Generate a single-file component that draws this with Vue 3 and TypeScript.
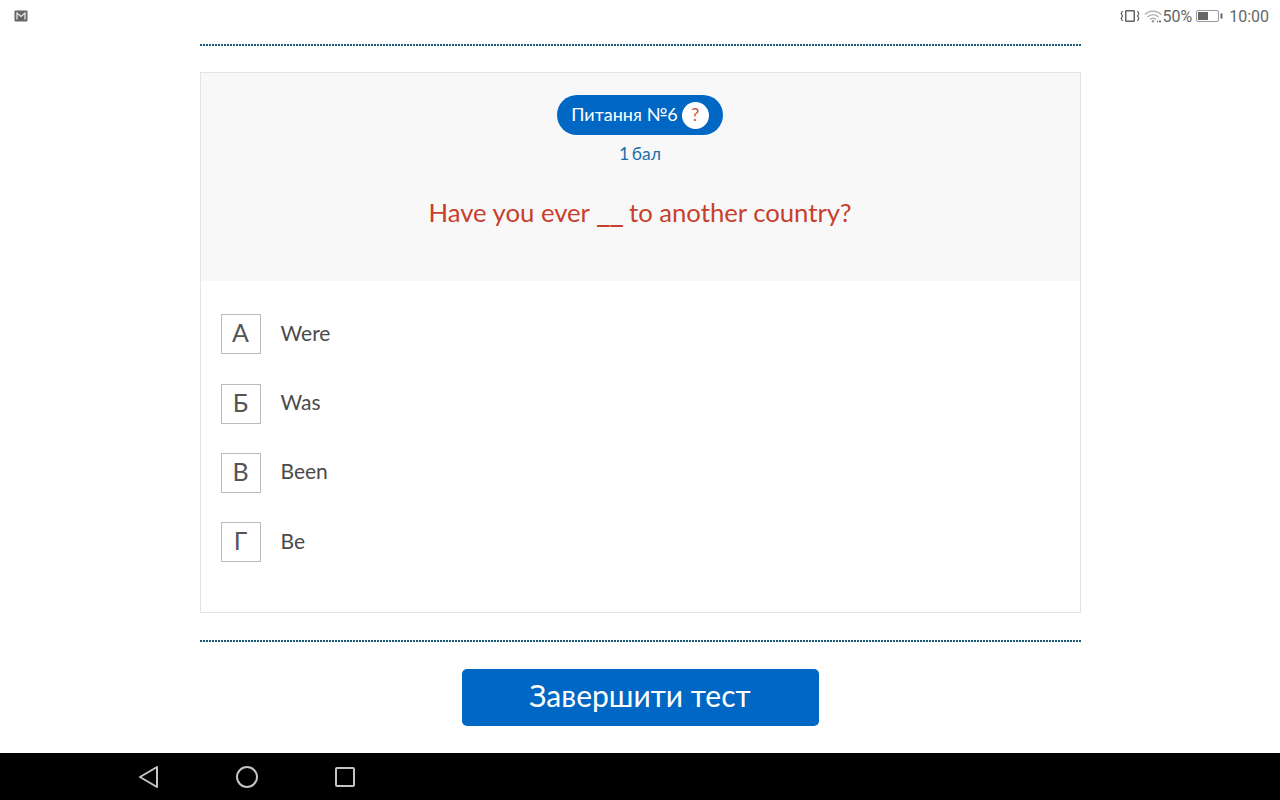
<script setup lang="ts">
const options = [
  { letter: "А", text: "Were" },
  { letter: "Б", text: "Was" },
  { letter: "В", text: "Been" },
  { letter: "Г", text: "Be" },
];
</script>

<template>
  <div class="screen">
    <div class="status">
      <svg class="mail" width="14" height="12" viewBox="0 0 14 12">
        <rect x="0.5" y="0.5" width="13" height="11" rx="1" fill="#666" />
        <path d="M3 9.5V3l4 3.5L11 3v6.5" fill="none" stroke="#eee" stroke-width="1.2" />
      </svg>
      <div class="status-right">
        <svg class="vibrate" width="20" height="16" viewBox="0 0 20 16" fill="none" stroke="#666">
          <rect x="5.750" y="2.750" width="8.500" height="10.500" rx="0.500" stroke-width="1.500" />
          <path d="M2.500 3 1.200 5.500l1.300 2.500-1.300 2.500L2.500 13M17.500 3l1.300 2.500L17.500 8l1.300 2.500L17.500 13" stroke-width="1.300" />
        </svg>
        <svg class="wifi" width="18" height="14" viewBox="0 0 18 14" fill="none" stroke="#a5a5a5">
          <path d="M1 5.500C5.500 1 12.500 1 17 5.500M3.500 8C6.500 5 11.500 5 14.500 8M6 10.500c1.800-1.600 4.200-1.600 6 0" stroke-width="1.200" />
          <circle cx="9" cy="12.300" r="1.200" fill="#999" stroke="none" />
          <path d="M13 12.500h1M15 12.500h2" stroke="#555" stroke-width="1.400" />
        </svg>
        <span class="pct">50%</span>
        <svg class="battery" width="27" height="12" viewBox="0 0 27 12">
          <rect x="0.500" y="0.500" width="22" height="11" rx="1.500" fill="none" stroke="#999" />
          <rect x="2" y="2" width="10" height="8" fill="#666" />
          <rect x="24.500" y="3.500" width="2" height="5" fill="#666" />
        </svg>
        <span class="time">10:00</span>
      </div>
    </div>

    <main class="content">
      <div class="dots"></div>
      <section class="card">
        <header class="card-head">
          <div class="pill">
            <span class="pill-label">Питання №6</span>
            <span class="hint">?</span>
          </div>
          <div class="score">1 бал</div>
          <h1 class="question">Have you ever <span class="blank">__</span> to another country?</h1>
        </header>
        <ul class="options">
          <li v-for="opt in options" :key="opt.letter" class="option">
            <span class="letter">{{ opt.letter }}</span>
            <span class="answer">{{ opt.text }}</span>
          </li>
        </ul>
      </section>
      <div class="dots"></div>
      <button class="finish" type="button">Завершити тест</button>
    </main>

    <nav class="navbar">
      <svg width="22" height="24" viewBox="0 0 22 24" fill="none" stroke="#c4c4c4" stroke-width="2" stroke-linejoin="round">
        <path d="M19 2 2 12l17 10z" />
      </svg>
      <svg width="24" height="24" viewBox="0 0 24 24" fill="none" stroke="#c4c4c4" stroke-width="2">
        <circle cx="12" cy="12" r="10" />
      </svg>
      <svg width="22" height="22" viewBox="0 0 22 22" fill="none" stroke="#c4c4c4" stroke-width="2" stroke-linejoin="round">
        <rect x="2" y="2" width="18" height="18" rx="1" />
      </svg>
    </nav>
  </div>
</template>

<style scoped>
.screen {
  width: 1280px;
  height: 800px;
  display: flex;
  flex-direction: column;
  background: #fff;
  overflow: hidden;
  font-family: Lato, "Noto Sans", sans-serif;
}

.status {
  height: 32px;
  flex: none;
  display: flex;
  align-items: center;
  justify-content: space-between;
  padding: 0 11px 0 14px;
  box-sizing: border-box;
}

.status-right {
  display: flex;
  align-items: center;
  color: #666;
  font-family: Roboto, sans-serif;
  font-size: 16px;
}

.vibrate {
  margin-right: 4px;
}

.pct {
  margin-right: 4px;
}

.battery {
  margin-right: 6px;
}

.content {
  flex: 1;
  width: 881px;
  margin: 0 auto;
  padding-top: 12px;
  display: flex;
  flex-direction: column;
  align-items: center;
}

.dots {
  width: 100%;
  height: 2px;
  background: repeating-linear-gradient(to right, #1c5a78 0 2px, transparent 2px 3px);
}

.card {
  width: 100%;
  height: 541px;
  margin: 26px 0 27px;
  box-sizing: border-box;
  border: 1px solid #e3e3e3;
}

.card-head {
  height: 208px;
  padding-top: 22px;
  box-sizing: border-box;
  background: #f8f8f8;
  display: flex;
  flex-direction: column;
  align-items: center;
}

.pill {
  height: 40px;
  box-sizing: border-box;
  padding: 0 14px;
  border-radius: 20px;
  background: #0068c4;
  color: #fff;
  font-size: 18px;
  display: flex;
  align-items: center;
  gap: 4px;
}

.pill-label {
  padding-bottom: 3px;
}

.hint {
  width: 27px;
  height: 27px;
  padding-bottom: 2px;
  box-sizing: border-box;
  border-radius: 50%;
  background: #fff;
  color: #c8503c;
  font-size: 18px;
  display: flex;
  align-items: center;
  justify-content: center;
}

.score {
  margin-top: 8px;
  color: #1a6fa8;
  font-size: 17.500px;
  line-height: 22px;
  word-spacing: -2px;
}

.question {
  margin: 31px 0 0;
  color: #c8402c;
  font-size: 25.700px;
  font-weight: 400;
  line-height: 32px;
}

.blank {
  font-size: 32px;
  line-height: 0;
  letter-spacing: -1.500px;
}

.options {
  list-style: none;
  margin: 0;
  padding: 33.300px 20px 0;
  display: flex;
  flex-direction: column;
  gap: 29.300px;
}

.option {
  display: flex;
  align-items: center;
  gap: 20px;
}

.letter {
  width: 40px;
  height: 40px;
  box-sizing: border-box;
  padding-bottom: 4px;
  border: 1px solid #bbb;
  display: flex;
  align-items: center;
  justify-content: center;
  color: #555;
  font-size: 25px;
}

.answer {
  padding-bottom: 4px;
  color: #4a4a4a;
  font-size: 21px;
}

.finish {
  width: 357px;
  height: 57px;
  margin-top: 27px;
  padding: 0 0 5px;
  border: none;
  border-radius: 5px;
  background: #0068c4;
  color: #fff;
  font-family: inherit;
  font-size: 30px;
}

.navbar {
  height: 47px;
  flex: none;
  background: #000;
  display: flex;
  align-items: center;
  padding-left: 138px;
  gap: 75px;
}
</style>

<style>
html,
body {
  margin: 0;
}
</style>
